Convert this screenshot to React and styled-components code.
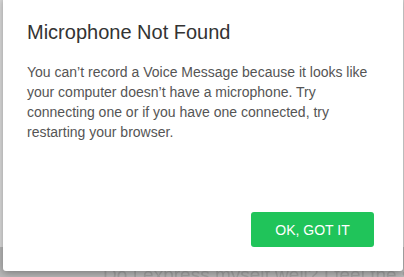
import styled, { createGlobalStyle } from 'styled-components';

const GlobalStyle = createGlobalStyle`
	html, body {
		margin: 0;
		padding: 0;
		width: 404px;
		height: 277px;
		overflow: hidden;
		background: #dedede;
		font-family: "Liberation Sans", Arial, sans-serif;
	}
`

const Page = styled.div`
	position: relative;
	width: 404px;
	height: 277px;
	display: flex;
	flex-direction: column;
	justify-content: flex-end;
	background: #dedede;
`

const Footer = styled.div`
	height: 30px;
	background: #b9b9b9;
	display: flex;
	align-items: flex-start;
	padding-left: 103px;
	padding-top: 17px;
	box-sizing: border-box;
	font-size: 19px;
	line-height: 22px;
	color: #a3a3a3;
	white-space: nowrap;
	overflow: hidden;
	filter: blur(0.4px);
`

const Modal = styled.div`
	position: absolute;
	left: 3px;
	top: -4px;
	width: 400px;
	height: 275px;
	box-sizing: border-box;
	background: #fff;
	border-radius: 3px;
	box-shadow: 0 2px 8px rgba(0, 0, 0, 0.35);
	padding: 22px 29px 24px 24px;
	display: flex;
	flex-direction: column;
`

const Body = styled.div`
	flex: 1;
`

const Title = styled.h2`
	margin: 0;
	font-size: 20px;
	font-weight: 400;
	line-height: 28px;
	color: #333;
`

const Text = styled.p`
	margin: 16px 0 0;
	font-size: 14px;
	line-height: 20px;
	color: #555;
`

const Line = styled.span`
	display: block;
`

const Actions = styled.div`
	display: flex;
	justify-content: flex-end;
`

const Button = styled.button`
	width: 123px;
	height: 35px;
	border: none;
	border-radius: 3px;
	background: #20c45a;
	color: #fff;
	font-family: inherit;
	font-size: 14px;
	text-transform: uppercase;
	cursor: pointer;
`

const lines = [
	'You can’t record a Voice Message because it looks like',
	'your computer doesn’t have a microphone. Try',
	'connecting one or if you have one connected, try',
	'restarting your browser.',
]

export default function App() {
	return (
		<>
			<GlobalStyle />
			<Page>
				<Footer>Do I express myself well? I feel the same too</Footer>
				<Modal>
					<Body>
						<Title>Microphone Not Found</Title>
						<Text>
							{lines.map((l) => <Line key={l}>{l}</Line>)}
						</Text>
					</Body>
					<Actions>
						<Button>Ok, got it</Button>
					</Actions>
				</Modal>
			</Page>
		</>
	)
}
